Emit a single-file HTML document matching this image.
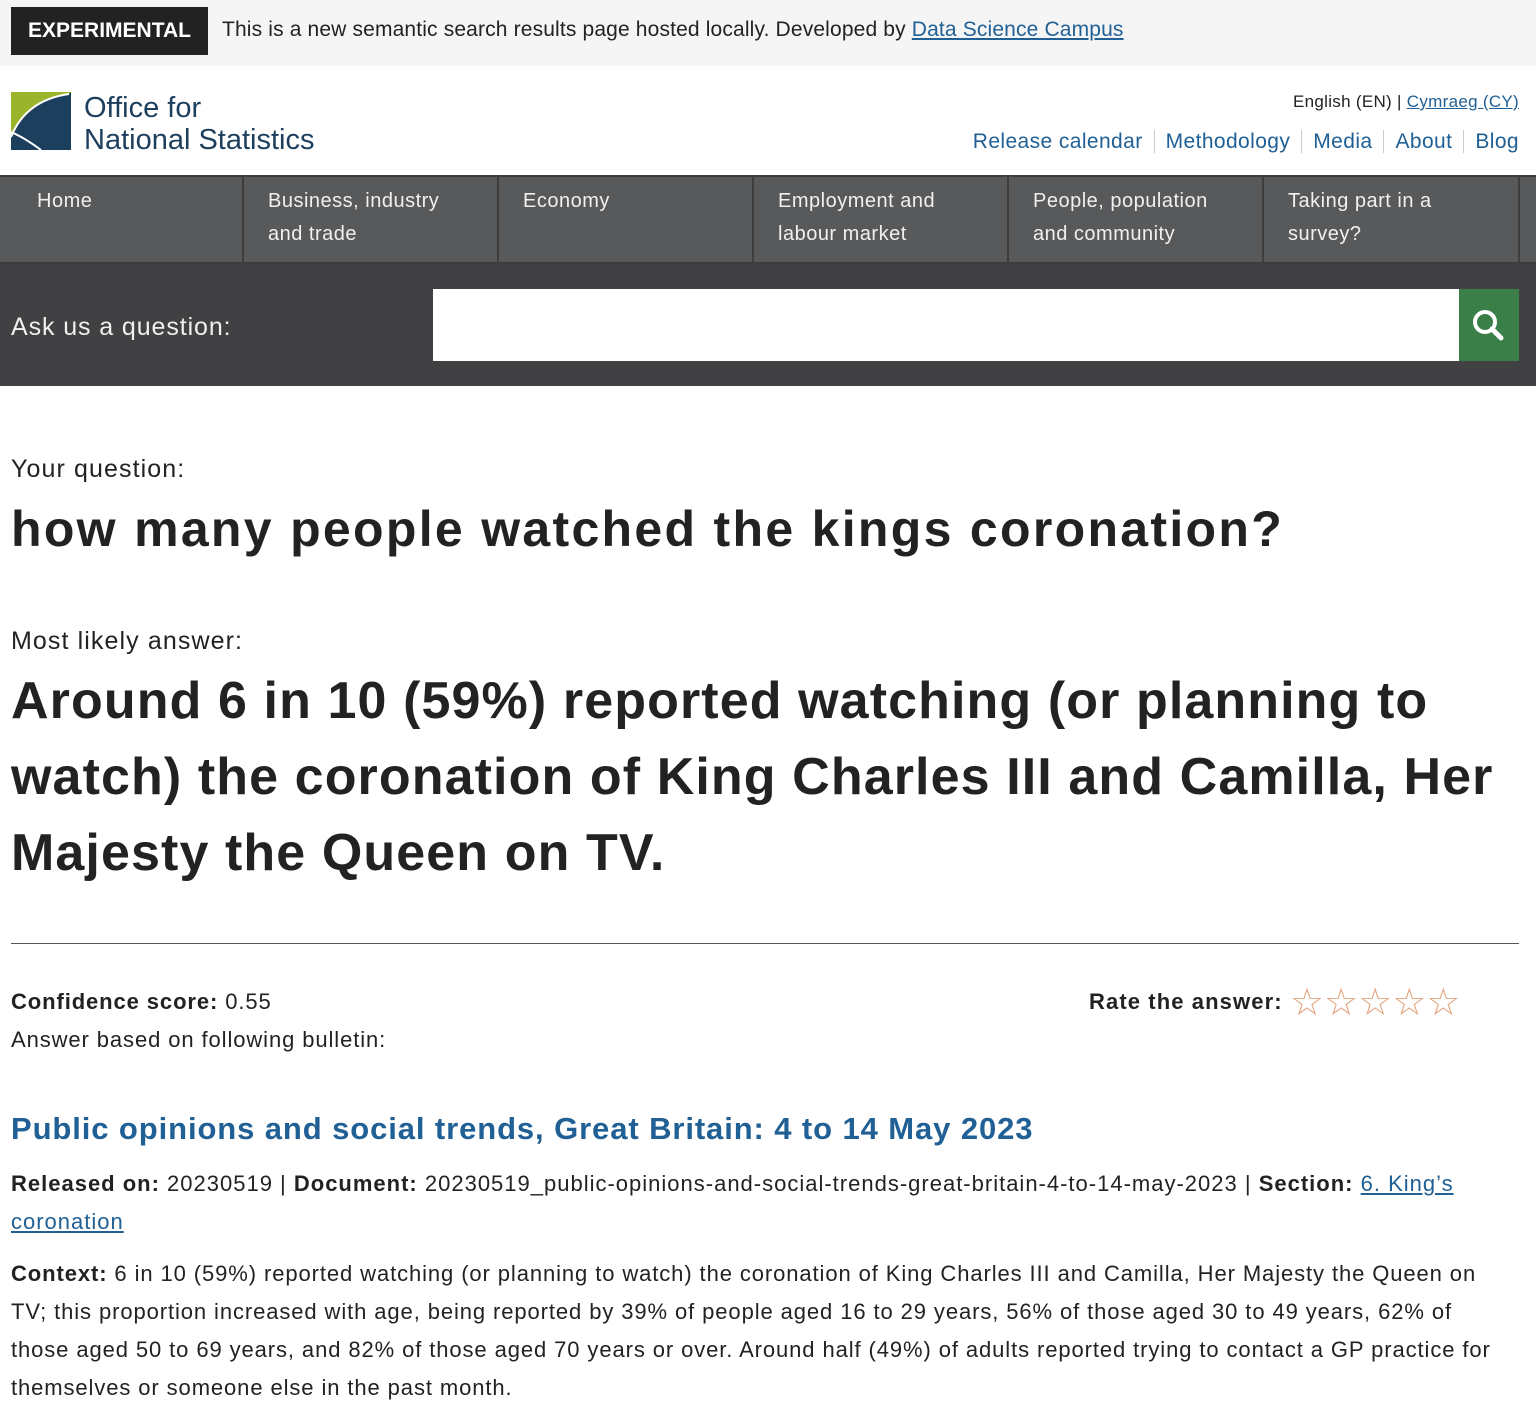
<!DOCTYPE html>
<html><head><meta charset="utf-8"><style>
*{margin:0;padding:0;box-sizing:border-box}
body{width:1536px;height:1412px;overflow:hidden;font-family:"Liberation Sans",Arial,sans-serif;color:#222;background:#fff}
.banner{height:66px;background:#f5f5f6;position:relative}
.exp{position:absolute;left:11px;top:7px;width:197px;height:48px;background:#222;color:#fff;font-weight:bold;font-size:21px;line-height:48px;text-align:center}
.btext{position:absolute;left:222px;top:18px;font-size:21px;letter-spacing:0.15px}
a{color:#206095}
.logo{position:absolute;left:11px;top:92px}
.lang{position:absolute;right:17px;top:92px;font-size:17px;letter-spacing:0.3px}
.links{position:absolute;right:17px;top:130px;font-size:21px;color:#206095;letter-spacing:0.4px}
.links span{padding:0 11px;border-left:1px solid #ccc}
.links span:first-child{border:none}
.links span:last-child{padding-right:0}
.nav{position:absolute;top:175px;left:0;width:1536px;height:89px;background:#58595b;border-top:2px solid #3d3d3d;border-bottom:2px solid #3d3d3d}
.nav div{position:absolute;top:0;height:87px;border-right:2px solid #3d3d3d;color:#f0f0f0;font-size:20px;line-height:33px;padding:8px 0 0 25px;letter-spacing:0.5px}
.search{position:absolute;top:264px;left:0;width:1536px;height:122px;background:#414042}
.search .lbl{position:absolute;left:11px;top:49px;color:#f0f0f0;font-size:25px;letter-spacing:0.9px}
.search .box{position:absolute;left:433px;top:25px;width:1026px;height:72px;background:#fff}
.search .btn{position:absolute;left:1459px;top:25px;width:60px;height:72px;background:#3a7f48}
.main{position:absolute;top:0;left:11px;width:1510px}
</style></head><body>
<div class="banner"><div class="exp">EXPERIMENTAL</div><div class="btext">This is a new semantic search results page hosted locally. Developed by <a href="#">Data Science Campus</a></div></div>
<svg class="logo" width="304" height="62" viewBox="0 0 304 62">
<path d="M0 0H60V58H0Z" fill="#1d3f5e"/>
<path d="M0 0H60L58 2C30 6 10 20 0 45Z" fill="#9ab42c"/>
<path d="M58 2C30 6 10 20 0 45" stroke="#fff" stroke-width="2" fill="none"/>
<path d="M0 40C12 45 22 52 30 58" stroke="#fff" stroke-width="2" fill="none"/>
<text x="73" y="25" font-size="29" fill="#1d3f5e" font-family="Liberation Sans">Office for</text>
<text x="73" y="57" font-size="29" fill="#1d3f5e" font-family="Liberation Sans">National Statistics</text>
</svg>
<div class="lang">English (EN) | <a href="#">Cymraeg (CY)</a></div>
<div class="links"><span>Release calendar</span><span>Methodology</span><span>Media</span><span>About</span><span>Blog</span></div>
<div class="nav">
<div style="left:12px;width:232px">Home</div>
<div style="left:243px;width:256px">Business, industry<br>and trade</div>
<div style="left:498px;width:256px">Economy</div>
<div style="left:753px;width:256px">Employment and<br>labour market</div>
<div style="left:1008px;width:256px">People, population<br>and community</div>
<div style="left:1263px;width:257px">Taking part in a<br>survey?</div>
</div>
<div class="search"><div class="lbl">Ask us a question:</div><div class="box"></div><div class="btn"><svg width="60" height="72"><circle cx="26" cy="33" r="10" stroke="#fff" stroke-width="4" fill="none"/><path d="M33 40L42 49" stroke="#fff" stroke-width="5" stroke-linecap="round"/></svg></div></div>
<div class="main">
<div style="position:absolute;top:455px;font-size:25px;letter-spacing:1.1px">Your question:</div>
<div style="position:absolute;top:500px;font-size:50px;font-weight:bold;letter-spacing:2.3px">how many people watched the kings coronation?</div>
<div style="position:absolute;top:627px;font-size:25px;letter-spacing:1.1px">Most likely answer:</div>
<div style="position:absolute;top:663px;font-size:52px;font-weight:bold;line-height:76px;width:1515px;letter-spacing:1.1px">Around 6 in 10 (59%) reported watching (or planning to watch) the coronation of King Charles III and Camilla, Her Majesty the Queen on TV.</div>
<div style="position:absolute;top:943px;width:1508px;border-top:1px solid #555"></div>
<div style="position:absolute;top:989px;font-size:22px;letter-spacing:0.9px"><b>Confidence score:</b> 0.55</div>
<div style="position:absolute;top:1027px;font-size:22px;letter-spacing:0.9px">Answer based on following bulletin:</div>
<div style="position:absolute;top:989px;left:1078px;font-size:22px;font-weight:bold;letter-spacing:1.1px">Rate the answer:</div>
<div style="position:absolute;top:980px;left:1279px;font-size:38px;color:#e2a37c;letter-spacing:0px">☆☆☆☆☆</div>
<div style="position:absolute;top:1111px;font-size:31px;font-weight:bold;color:#206095;letter-spacing:0.9px">Public opinions and social trends, Great Britain: 4 to 14 May 2023</div>
<div style="position:absolute;top:1165px;font-size:22px;line-height:38px;width:1510px;letter-spacing:1.0px"><b>Released on:</b> 20230519 | <b>Document:</b> 20230519_public-opinions-and-social-trends-great-britain-4-to-14-may-2023 | <b>Section:</b> <a href="#">6. King’s coronation</a></div>
<div style="position:absolute;top:1255px;font-size:22px;line-height:38px;width:1503px;letter-spacing:0.9px"><b>Context:</b> 6 in 10 (59%) reported watching (or planning to watch) the coronation of King Charles III and Camilla, Her Majesty the Queen on TV; this proportion increased with age, being reported by 39% of people aged 16 to 29 years, 56% of those aged 30 to 49 years, 62% of those aged 50 to 69 years, and 82% of those aged 70 years or over. Around half (49%) of adults reported trying to contact a GP practice for themselves or someone else in the past month.</div>
</div>
</body></html>
